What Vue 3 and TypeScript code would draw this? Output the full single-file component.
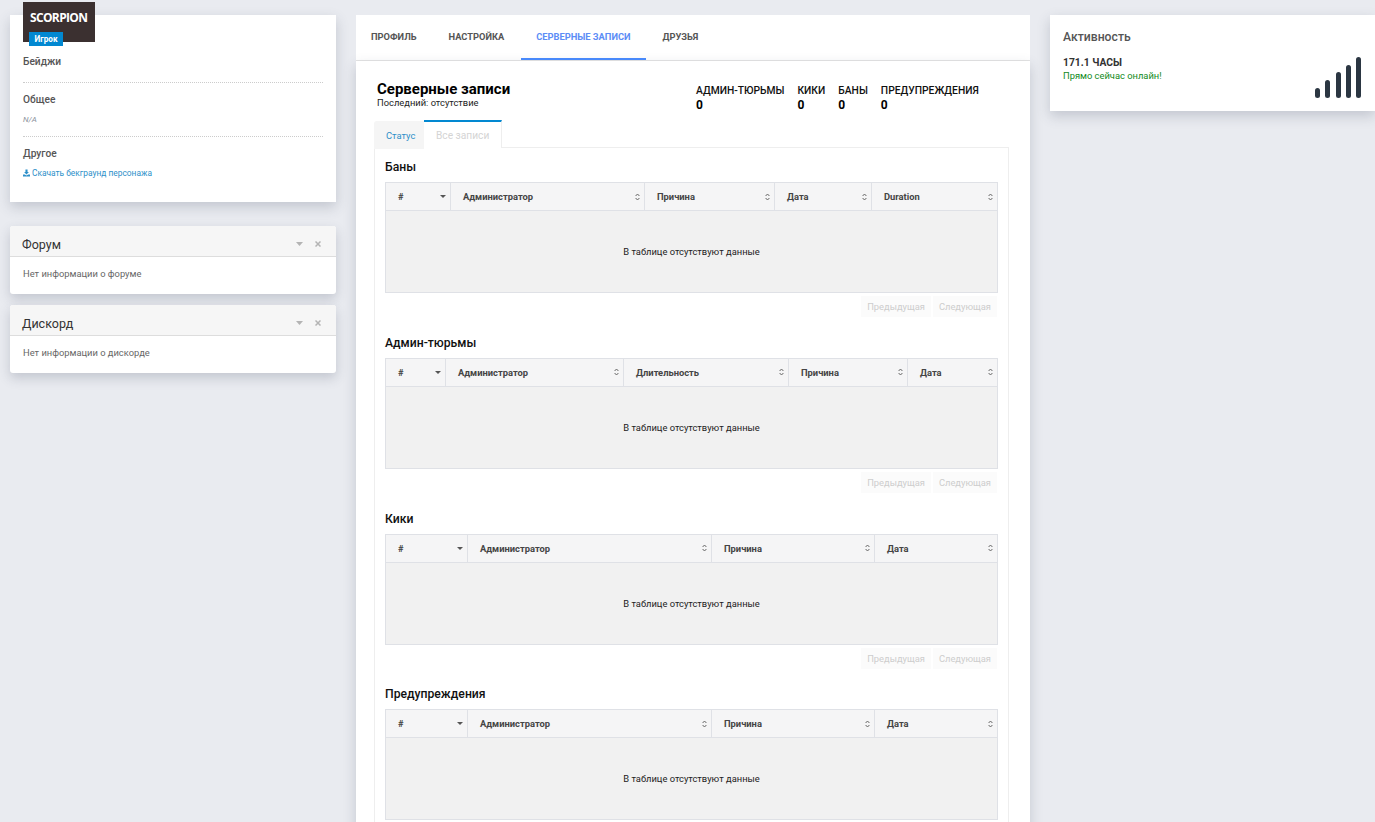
<template>
  <div class="page">
    <!-- Левая колонка -->
    <aside class="left">
      <div class="card profile">
        <div class="logo">SCORPION</div>
        <span class="role">Игрок</span>
        <div class="block first">
          <h4>Бейджи</h4>
        </div>
        <div class="block">
          <h4>Общее</h4>
          <p class="na">N/A</p>
        </div>
        <div class="block last">
          <h4>Другое</h4>
          <a class="link">
            <svg width="7" height="8" viewBox="0 0 10 10"><path d="M3.5 0h3v3.6h2L5 7.2 1.5 3.6h2zM0 7.2h2.6L5 8.6l2.4-1.4H10V10H0z" fill="currentColor" /></svg>
            Скачать бекграунд персонажа
          </a>
        </div>
      </div>

      <div v-for="w in widgets" :key="w.title" class="card widget">
        <div class="widget-head">
          <span class="widget-title">{{ w.title }}</span>
          <div class="widget-tools">
            <svg width="7" height="4" viewBox="0 0 7 4"><path d="M0 0h7L3.5 4z" fill="#b4b4b4" /></svg>
            <svg width="6" height="6" viewBox="0 0 6 6"><path d="M.5.5l5 5M5.5.5l-5 5" stroke="#b4b4b4" stroke-width="1.5" /></svg>
          </div>
        </div>
        <div class="widget-body">{{ w.text }}</div>
      </div>
    </aside>

    <!-- Центр -->
    <main class="center">
      <nav class="nav">
        <a v-for="t in navTabs" :key="t" class="nav-item" :class="{ active: t === 'Серверные записи' }">{{ t }}</a>
      </nav>
      <div class="records">
        <div class="records-head">
          <div class="records-title">
            <h2>Серверные записи</h2>
            <p>Последний: отсутствие</p>
          </div>
          <div class="stats">
            <div v-for="s in stats" :key="s" class="stat">
              <span>{{ s }}</span>
              <b>0</b>
            </div>
          </div>
        </div>

        <div class="tabs">
          <a class="tab">Статус</a>
          <a class="tab active">Все записи</a>
        </div>
        <div class="tab-content">
          <section v-for="(sec, n) in sections" :key="sec.title" class="section">
            <h3>{{ sec.title }}</h3>
            <table>
              <colgroup>
                <col v-for="c in sec.cols" :key="c.name" :style="{ width: c.width + 'px' }" />
              </colgroup>
              <thead>
                <tr>
                  <th v-for="(c, i) in sec.cols" :key="c.name">
                    <div class="th-in">
                      <span>{{ c.name }}</span>
                      <svg v-if="i === 0" width="6" height="3" viewBox="0 0 6 3"><path d="M0 0h6L3 3z" fill="#555" /></svg>
                      <svg v-else width="5" height="8" viewBox="0 0 5 8" fill="none" stroke="#666" stroke-width="1"><path d="M.6 3L2.5 1 4.4 3M.6 5l1.9 2 1.9-2" /></svg>
                    </div>
                  </th>
                </tr>
              </thead>
              <tbody>
                <tr>
                  <td :colspan="sec.cols.length">В таблице отсутствуют данные</td>
                </tr>
              </tbody>
            </table>
            <div v-if="n < sections.length - 1" class="pager">
              <a>Предыдущая</a>
              <a>Следующая</a>
            </div>
          </section>
        </div>
      </div>
    </main>

    <!-- Правая колонка -->
    <aside class="right">
      <div class="card activity">
        <div class="activity-text">
          <h4>Активность</h4>
          <b>171.1 ЧАСЫ</b>
          <span>Прямо сейчас онлайн!</span>
        </div>
        <div class="bars">
          <i v-for="h in bars" :key="h" :style="{ height: h + 'px' }"></i>
        </div>
      </div>
    </aside>
  </div>
</template>

<script setup lang="ts">
const widgets = [
  { title: 'Форум', text: 'Нет информации о форуме' },
  { title: 'Дискорд', text: 'Нет информации о дискорде' },
]

const navTabs = ['Профиль', 'Настройка', 'Серверные записи', 'Друзья']
const stats = ['Админ-тюрьмы', 'Кики', 'Баны', 'Предупреждения']
const bars = [10, 18, 26, 33, 41]

const sections = [
  {
    title: 'Баны',
    cols: [
      { name: '#', width: 65 },
      { name: 'Администратор', width: 194 },
      { name: 'Причина', width: 130 },
      { name: 'Дата', width: 97 },
      { name: 'Duration', width: 126 },
    ],
  },
  {
    title: 'Админ-тюрьмы',
    cols: [
      { name: '#', width: 60 },
      { name: 'Администратор', width: 178 },
      { name: 'Длительность', width: 165 },
      { name: 'Причина', width: 119 },
      { name: 'Дата', width: 90 },
    ],
  },
  {
    title: 'Кики',
    cols: [
      { name: '#', width: 82 },
      { name: 'Администратор', width: 244 },
      { name: 'Причина', width: 163 },
      { name: 'Дата', width: 123 },
    ],
  },
  {
    title: 'Предупреждения',
    cols: [
      { name: '#', width: 82 },
      { name: 'Администратор', width: 244 },
      { name: 'Причина', width: 163 },
      { name: 'Дата', width: 123 },
    ],
  },
]
</script>

<style>
html,
body {
  background: #e9ebf0;
}
</style>

<style scoped>
.page {
  height: 822px;
  overflow: hidden;
  display: grid;
  grid-template-columns: 326px 674px 325px;
  column-gap: 20px;
  padding: 15px 0 0 10px;
  box-sizing: border-box;
  font-family: Roboto, "Liberation Sans", sans-serif;
  font-size: 9.35px;
  color: #555;
  background: #e9ebf0;
}

.card {
  background: #fff;
  box-shadow: 0 5px 12px rgba(60, 70, 90, 0.22);
}

.left {
  display: flex;
  flex-direction: column;
}

.profile {
  position: relative;
  height: 187px;
  box-sizing: border-box;
  padding: 0 13px;
  margin-bottom: 24px;
}

.logo {
  position: absolute;
  left: 13px;
  top: -13px;
  width: 72px;
  height: 40px;
  box-sizing: border-box;
  padding: 7px 0 0 7px;
  background: #3b3030;
  color: #fff;
  font-family: "Open Sans", sans-serif;
  font-size: 12px;
  font-weight: 700;
  letter-spacing: -0.65px;
}

.role {
  position: absolute;
  left: 19px;
  top: 17px;
  width: 34px;
  height: 14px;
  background: #0288d1;
  color: #fff;
  font-size: 8.2px;
  font-weight: 700;
  line-height: 14px;
  text-align: center;
}

.block {
  border-bottom: 1px dotted #ccc;
  height: 54px;
  box-sizing: border-box;
  padding-top: 11px;
}

.block.first {
  height: 68px;
  padding-top: 41px;
}

.block.last {
  border-bottom: 0;
}

.block h4 {
  margin: 0;
  font-size: 10.2px;
  line-height: 12px;
  font-weight: 500;
  color: #555;
}

.na {
  margin: 9px 0 0;
  font-size: 8px;
  line-height: 10px;
  font-style: italic;
  color: #8a8f99;
}

.link {
  display: flex;
  align-items: center;
  gap: 2px;
  margin-top: 7px;
  color: #2d8fc9;
  font-size: 8.4px;
  line-height: 12px;
}

.widget {
  border-radius: 3px;
  margin-bottom: 11px;
}

.widget-head {
  height: 31px;
  box-sizing: border-box;
  display: flex;
  align-items: flex-end;
  justify-content: space-between;
  padding: 0 15px 3px 12px;
  background: #f6f6f6;
  border-bottom: 1px solid #ddd;
  border-radius: 3px 3px 0 0;
}

.widget-title {
  font-size: 12.5px;
  line-height: 16px;
  color: #333;
}

.widget-tools {
  display: flex;
  align-items: center;
  gap: 12px;
  padding-bottom: 6px;
}

.widget-body {
  height: 37px;
  box-sizing: border-box;
  padding: 11px 13px 0;
  font-size: 9.35px;
  line-height: 12px;
  color: #666;
}

.center {
  display: flex;
  flex-direction: column;
}

.nav {
  height: 46px;
  flex: none;
  display: flex;
  box-sizing: border-box;
  background: #fff;
  border-bottom: 1px solid #e4e4e4;
}

.nav-item {
  height: 45px;
  box-sizing: border-box;
  padding: 15px 15px 0;
  font-size: 9.3px;
  line-height: 13px;
  font-weight: 700;
  text-transform: uppercase;
  color: #555;
  margin-right: 2px;
}

.nav-item.active {
  color: #5c8df6;
  border-bottom: 2px solid #4a8cff;
}

.records {
  flex: 1;
  background: #fff;
  box-shadow: 0 5px 12px rgba(60, 70, 90, 0.22);
  padding: 0 21px 0 18px;
}

.records-head {
  display: flex;
  height: 59px;
  padding-left: 3px;
}

.records-title {
  width: 319px;
  padding-top: 20px;
}

.records-title h2 {
  margin: 0;
  font-size: 15px;
  line-height: 16px;
  font-weight: 700;
  color: #000;
}

.records-title p {
  margin: 0;
  font-size: 9.35px;
  line-height: 12px;
  color: #222;
}

.stats {
  display: flex;
  gap: 13px;
  padding-top: 23px;
}

.stat {
  display: flex;
  flex-direction: column;
  font-size: 10.3px;
  line-height: 13px;
  font-weight: 500;
  text-transform: uppercase;
  color: #111;
}

.stat b {
  font-size: 12px;
  line-height: 16px;
  color: #000;
}

.tabs {
  display: flex;
  height: 28px;
  box-sizing: border-box;
}

.tab {
  box-sizing: border-box;
  padding: 0 9px 0 12px;
  width: 50px;
  height: 28px;
  font-size: 9.35px;
  line-height: 29px;
  background: #f5f5f5;
  color: #2d8fc9;
  margin-top: 1px;
  border-radius: 3px 0 0 0;
}

.tab.active {
  width: 78px;
  background: #fff;
  color: #d4d4d4;
  margin-top: 0;
  border-top: 2px solid #0288d1;
  position: relative;
  z-index: 1;
  border-radius: 0;
  border-right: 1px solid #eee;
  padding: 0 0 0 12px;
  font-size: 10.2px;
  line-height: 27px;
}

.tab-content {
  border: 1px solid #eee;
  padding: 10px 10px 0;
  margin-top: -1px;
}

.section {
  height: 175.75px;
}

.section h3 {
  margin: 0;
  height: 24px;
  font-size: 12.2px;
  line-height: 18px;
  font-weight: 500;
  color: #111;
}

table {
  border-collapse: collapse;
  table-layout: fixed;
  width: 612px;
  background: #f1f1f1;
}

th {
  height: 28px;
  padding: 0 4px 0 12px;
  box-sizing: border-box;
  background: #f5f5f6;
  border: 1px solid #dfe1e6;
  font-size: 9.35px;
  font-weight: 700;
  text-align: left;
  color: #444;
}

.th-in {
  display: flex;
  align-items: center;
  justify-content: space-between;
}

td {
  height: 81px;
  padding: 0;
  border: 1px solid #dfe1e6;
  font-size: 9.35px;
  color: #222;
  text-align: center;
}

.pager {
  display: flex;
  justify-content: flex-end;
  gap: 2px;
  margin-top: 3px;
  padding-right: 1px;
}

.pager a {
  padding: 0 6px;
  height: 21px;
  line-height: 21px;
  font-size: 9.35px;
  background: #fbfbfb;
  color: #cdcdcd;
}

.activity {
  height: 96px;
  box-sizing: border-box;
  display: flex;
  justify-content: space-between;
  padding: 0 14px 13px 13px;
}

.activity-text {
  display: flex;
  flex-direction: column;
  padding-top: 15px;
}

.activity-text h4 {
  margin: 0 0 11px;
  font-size: 12.2px;
  line-height: 15px;
  font-weight: 500;
  color: #555;
}

.activity-text b {
  font-size: 10.3px;
  line-height: 13px;
  font-weight: 700;
  color: #333;
}

.activity-text span {
  font-size: 9.35px;
  line-height: 13px;
  color: #118a22;
}

.bars {
  display: flex;
  align-items: flex-end;
  gap: 5.25px;
}

.bars i {
  display: block;
  width: 5px;
  border-radius: 3px;
  background: #2b3642;
}
</style>
